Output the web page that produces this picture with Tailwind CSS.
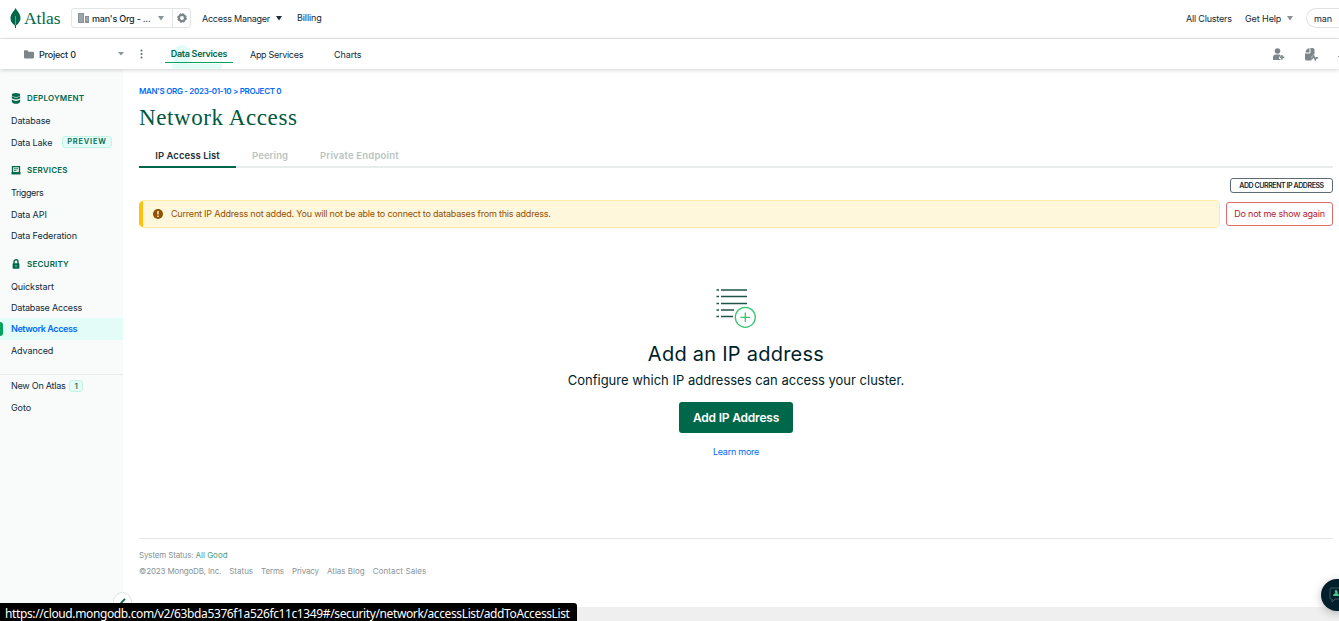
<!DOCTYPE html>
<html lang="en">
<head>
<meta charset="utf-8">
<title>Network Access | Atlas</title>
<script src="https://cdn.jsdelivr.net/npm/@tailwindcss/browser@4"></script>
</head>
<body class="relative flex h-[621px] w-[1339px] flex-col overflow-hidden whitespace-nowrap bg-white font-['Inter','Liberation_Sans',sans-serif] text-[9px] leading-none tracking-[-0.1px] text-[#0f2a38]">
<header class="flex h-[39px] shrink-0 items-center border-b border-[#e6eaea] pb-[2px]">
  <div class="ml-[10px] flex w-[61px] items-center">
    <svg class="h-5 w-[11px]" viewBox="0 0 11 20"><path d="M5.500 0C7 3 10.500 5.500 10.500 10c0 4-3 6.500-4.400 7.300L6 20H5l-.2-2.700C3 16 .5 14 .5 10 .5 5.500 4.500 3 5.500 0z" fill="#00684a"/><path d="M5.300 8h.5v9h-.5z" fill="#b8d6c9"/></svg>
    <span class="ml-[3px] mt-[2px] font-['Liberation_Serif',serif] text-[17.5px] tracking-[-0.1px] text-[#00684a]">Atlas</span>
  </div>
  <div class="flex h-5 w-[120px] items-center rounded-[3px] border border-[#e1e5e4] text-[9px]">
    <svg class="ml-[6px] h-[10px] w-[11px]" viewBox="0 0 11 10"><path d="M0 0h6v10H0zM7 3h4v7H7z" fill="#889397"/><path d="M1.500 2h1M3.500 2h1M1.500 4h1M3.500 4h1M1.500 6h1M3.500 6h1M1.500 8h1M3.500 8h1M8.500 5h1M8.500 7h1" stroke="#fff" stroke-width=".7"/></svg>
    <span class="ml-[3px] w-[66px] font-medium tracking-[-0.2px]">man's Org - ...</span>
    <svg class="h-[5px] w-[6px]" viewBox="0 0 6 5"><path d="M0 0h6L3 4.500z" fill="#889397"/></svg>
    <span class="ml-[8px] flex h-full flex-1 items-center justify-center border-l border-[#e1e5e4]"><svg class="h-[10px] w-[10px]" viewBox="0 0 10 10"><circle cx="5" cy="5" r="3.100" fill="none" stroke="#7c8689" stroke-width="2.400"/><circle cx="5" cy="5" r="4.400" fill="none" stroke="#7c8689" stroke-width="1" stroke-dasharray="1.900 1.550"/></svg></span>
  </div>
  <span class="ml-[11px] w-[74px] pt-px text-[9px] tracking-[-0.25px]">Access Manager</span>
  <svg class="h-[5px] w-[6px]" viewBox="0 0 6 5"><path d="M0 0h6L3 4.500z" fill="#1c2d38"/></svg>
  <span class="ml-[15px] pb-px">Billing</span>
  <span class="ml-auto w-[59px] pt-px text-[9px] tracking-[-0.2px]">All Clusters</span>
  <span class="w-[42px] text-[9px]">Get Help</span>
  <svg class="h-[5px] w-[6px]" viewBox="0 0 6 5"><path d="M0 0h6L3 4.500z" fill="#889397"/></svg>
  <div class="ml-[13px] flex h-5 w-[33px] items-center rounded-l-full border border-r-0 border-[#dfe3e2] pl-[7px]">man</div>
</header>
<nav class="relative z-10 flex h-[30px] shrink-0 items-center bg-white shadow-[0_1px_4px_rgba(0,0,0,0.18)]">
  <svg class="ml-[24px] h-[9px] w-[10px]" viewBox="0 0 10 9"><path d="M0 1.200C0 .5.400.3 1 .3h2.500l1 1.500H9q1 0 1 1V7.500q0 1-1 1H1q-1 0-1-1z" fill="#7c8689"/></svg>
  <span class="ml-[5px] w-[79px] font-medium tracking-[-0.2px]">Project 0</span>
  <svg class="h-[4px] w-[6px]" viewBox="0 0 6 4"><path d="M0 0h6L3 3.500z" fill="#889397"/></svg>
  <svg class="ml-[16px] h-[10px] w-[3px]" viewBox="0 0 3 10" fill="#5c6c75"><circle cx="1.500" cy="1.500" r="1"/><circle cx="1.500" cy="5" r="1"/><circle cx="1.500" cy="8.500" r="1"/></svg>
  <div class="relative ml-[22px] flex h-full w-[68px] justify-center text-[9px] font-semibold tracking-[-0.3px] text-[#00684a]">
    <div class="absolute left-[7px] top-[6px] h-[20px] w-[20px] rounded-full bg-[#e3fcf7]"></div>
    <div class="absolute left-[7px] top-[25px] h-[5px] w-[50px] bg-[#e3fcf7]"></div>
    <div class="relative mt-[5px] flex h-[19px] w-full items-center justify-center border-b border-[#00a35c]">Data Services</div>
  </div>
  <span class="ml-[17px] w-[84px] tracking-[-0.3px]">App Services</span>
  <span>Charts</span>
  <svg class="ml-auto h-3 w-3" viewBox="0 0 12 12" fill="#7c8689"><circle cx="4.500" cy="3" r="2.800"/><path d="M0 12V9.500Q0 6.500 3 6.500h3q1 0 1.500.5v1.500H6V11h1.500v1zM8.300 7h1.400v1.600h1.600V10H9.700v1.700H8.300V10H6.800V8.600h1.500z"/></svg>
  <svg class="ml-[20px] mr-[21px] h-[13px] w-[13px]" viewBox="0 0 13 13" fill="#7c8689"><path d="M4.500 0v4.500H.5Q.5 1 4.500 0zM5.500 0h2q2 0 2 2v4.500L8.500 6 7 9 6.500 8v4.500H1.500Q0 12.500 0 11V5.500h4.500Q5.500 5.500 5.500 4.500z"/><path d="M6 10.500h1.200l1.500-2.800 1.600 4 1-2H13" fill="none" stroke="#7c8689" stroke-width="1.500"/></svg>
  <span class="absolute right-0 top-[17px] h-px w-[1px] bg-[#889397]"></span>
</nav>
<div class="flex h-[538px] shrink-0">
  <aside class="flex w-[123px] shrink-0 flex-col bg-[#f9fbfa] pt-[18px]">
    <div class="flex h-[22px] items-center pl-[11px] text-[8px] font-semibold tracking-[0.2px] text-[#00684a]"><svg class="mr-[6px] h-[11px] w-[10px]" viewBox="0 0 10 11" fill="#00684a"><ellipse cx="5" cy="2" rx="4.200" ry="1.900"/><path d="M.8 3.300Q5 6 9.200 3.300v1.900Q5 8 .8 5.200zM.8 6.500Q5 9.300 9.200 6.500v2Q8.500 10.800 5 10.800T.8 8.500z"/></svg>DEPLOYMENT</div>
    <a class="mt-px flex h-[22px] items-center pb-[2px] pl-[11px]">Database</a>
    <a class="flex h-[22px] items-center pb-[2px] pl-[11px]"><span class="w-[51px]">Data Lake</span><span class="flex h-[12px] w-[50px] items-center justify-center rounded-[3px] border border-[#c3f3e3] bg-[#e3fcf7] text-[7.5px] font-semibold tracking-[0.8px] text-[#00684a]">PREVIEW</span></a>
    <div class="mt-[5px] flex h-[22px] items-center pl-[11px] text-[8px] font-semibold tracking-[0.2px] text-[#00684a]"><svg class="mr-[6px] h-[9px] w-[10px]" viewBox="0 0 10 9"><path d="M1.500.7h7v6h-7z" fill="#e3f0eb" stroke="#00684a" stroke-width="1.300"/><path d="M.5 6h9v2.500h-9z" fill="#00684a"/><path d="M3 2.700h4M3 4.500h2.500" stroke="#00684a" stroke-width=".8"/></svg>SERVICES</div>
    <a class="mt-px flex h-[22px] items-center pb-[2px] pl-[11px] tracking-[-0.4px]">Triggers</a>
    <a class="flex h-[22px] items-center pb-[2px] pl-[11px]">Data API</a>
    <a class="flex h-[21px] items-center pb-[2px] pl-[11px]">Data Federation</a>
    <div class="mt-[5px] flex h-[23px] items-center pl-[12px] text-[8px] font-semibold tracking-[0.2px] text-[#00684a]"><svg class="mr-[7px] h-[10px] w-[8px]" viewBox="0 0 8 10"><path d="M2 5V2.800a2 2 0 0 1 4 0V5" fill="none" stroke="#00684a" stroke-width="1.400"/><rect x=".6" y="4.200" width="6.800" height="5.600" rx=".8" fill="#00684a"/><path d="M3.600 6h.8v2h-.8z" fill="#cde3da"/></svg>SECURITY</div>
    <a class="mt-px flex h-[21px] items-center pl-[11px]">Quickstart</a>
    <a class="flex h-[21px] items-center pl-[11px] tracking-[-0.2px]">Database Access</a>
    <a class="flex h-[22px] items-center bg-[#e3fcf7] font-semibold tracking-[-0.4px] text-[#016bf8]"><span class="mr-[8px] h-[14px] w-[3px] rounded-r-[3px] bg-[#00a35c]"></span><span class="pb-[2px]">Network Access</span></a>
    <a class="flex h-[22px] items-center pb-[2px] pl-[11px]">Advanced</a>
    <div class="mt-[12px] border-t border-[#e8edeb]"></div>
    <a class="flex h-[22px] items-center pl-[11px]"><span class="w-[58px] pb-[2px] tracking-[-0.25px]">New On Atlas</span><span class="flex h-[12px] w-[14px] items-center justify-center rounded-[3px] border border-[#c3f3e3] bg-[#e3fcf7] text-[8px] font-medium text-[#00684a]">1</span></a>
    <a class="flex h-[22px] items-center pb-[2px] pl-[11px]">Goto</a>
  </aside>
  <main class="flex flex-1 flex-col pl-[16px] pr-[6px] pt-[16px]">
    <div class="flex h-[11px] items-center text-[8px] font-semibold tracking-[-0.32px] text-[#016bf8]">MAN'S ORG - 2023-01-10 &gt; PROJECT 0</div>
    <h1 class="mt-[7px] flex h-[28px] items-center font-['Liberation_Serif',serif] text-[23px] tracking-[0.6px] text-[#00593f]">Network Access</h1>
    <div class="mt-[14px] flex h-[23px] border-b-2 border-[#e8edeb] text-[9.5px] font-semibold tracking-[0.1px] text-[#b8c4c2]">
      <span class="flex h-[23px] w-[97px] items-center justify-center border-b-2 border-[#00684a] tracking-[0.05px] text-[#21313c]">IP Access List</span>
      <span class="ml-[16px] flex h-[21px] w-[68px] items-center">Peering</span>
      <span class="flex h-[21px] items-center tracking-[0.2px]">Private Endpoint</span>
    </div>
    <div class="mt-[10px] flex h-[15px] justify-end"><button class="flex w-[103px] items-center justify-center rounded-[3px] border border-[#5c6c75] text-[7px] font-semibold tracking-[-0.42px]">ADD CURRENT IP ADDRESS</button></div>
    <div class="mt-[7px] flex h-[28px] items-center justify-between">
      <div class="flex h-[28px] w-[1081px] items-center overflow-hidden rounded-[5px] border border-l-0 border-[#ffec9e] bg-[#fef7db] text-[#944f01]"><span class="h-[28px] w-[4px] bg-[#ffc010]"></span>
        <svg class="ml-[10px] h-[10px] w-[10px]" viewBox="0 0 10 10"><circle cx="5" cy="5" r="5" fill="#944f01"/><path d="M4.300 2h1.400v3.500H4.300zM4.300 6.500h1.400v1.400H4.300z" fill="#fef7db"/></svg>
        <span class="ml-[8px] pb-[2px] tracking-[-0.2px]">Current IP Address not added. You will not be able to connect to databases from this address.</span></div>
      <button class="flex h-[24px] w-[107px] items-center justify-center rounded-[3px] border border-[#e06c69] pb-[1px] text-[9px] tracking-[-0.2px] text-[#b5202d]">Do not me show again</button>
    </div>
    <section class="mt-[60px] flex h-[250px] flex-col items-center">
      <svg class="h-[40px] w-[40px]" viewBox="0 0 40 40" fill="none"><path d="M5 2h26M5 8.500h26M5 15.500h26M5 22h13M5 28.500h12" stroke="#1f5549" stroke-width="1.400"/><path d="M.5 2h2.500M.5 8.500h2.500M.5 15.500h2.500M.5 22h2.500M.5 28.500h2.500" stroke="#1f5549" stroke-width="1.500"/><circle cx="29.300" cy="29.300" r="10" stroke="#35c56f" stroke-width="1.300"/><path d="M29.300 24.500v9.600M24.500 29.300h9.600" stroke="#35c56f" stroke-width="1.300"/></svg>
      <h2 class="mt-[14px] flex h-[24px] items-center text-[20px] tracking-[0.25px] text-[#001e2b]">Add an IP address</h2>
      <p class="mt-[6px] flex h-[16px] items-center pt-px text-[13px] tracking-normal text-[#001e2b]">Configure which IP addresses can access your cluster.</p>
      <button class="mt-[14px] flex h-[31px] w-[114px] items-center justify-center rounded-[3px] bg-[#00684a] text-[12px] font-semibold tracking-[-0.2px] text-white">Add IP Address</button>
      <a class="mt-[13px] flex h-[12px] items-center pb-[2px] tracking-[-0.25px] text-[#016bf8]">Learn more</a>
    </section>
    <footer class="border-t border-[#e3e6e5] pt-[10px] text-[8px] tracking-[-0.15px] text-[#889397]">
      <div class="flex h-[12px] items-center">System Status:&nbsp;<span class="text-[#4d9a80] tracking-normal">All Good</span></div>
      <div class="mt-[4px] flex h-[12px] items-center gap-[8px]"><span>©2023 MongoDB, Inc.</span><span class="tracking-normal">Status</span><span>Terms</span><span>Privacy</span><span class="tracking-normal">Atlas Blog</span><span class="tracking-[0.1px]">Contact Sales</span></div>
    </footer>
  </main>
</div>
<div class="h-[14px] shrink-0 bg-[#efefef]"></div>
<div class="absolute left-[113px] top-[592px] flex h-[19px] w-[19px] justify-center rounded-full border border-[#dde5e2] bg-white pt-[5px]"><svg class="h-[9px] w-[6px]" viewBox="0 0 6 9"><path d="M5 .8 1.500 4.500 5 8.200" fill="none" stroke="#00684a" stroke-width="1.800"/></svg></div>
<div class="absolute left-[1321px] top-[579px] flex h-[32px] w-[32px] items-center rounded-full bg-[#001e2b] shadow-[0_2px_8px_rgba(0,0,0,0.25)]"><svg class="ml-[8px] h-[16px] w-[18px]" viewBox="0 0 18 16" fill="none"><path d="M2 1h14q1 0 1 1v9q0 1-1 1H6l-3 3v-3H2q-1 0-1-1V2q0-1 1-1z" stroke="#3d5a62"/><path d="M4 9Q4 6 6.500 6.500 5 3 7 3t1.500 3.500Q10 6 10 9zM11 9V7h2l-1-3h2l3 5z" fill="#47c58a"/></svg></div>
<div class="absolute bottom-0 left-0 flex h-[18px] w-[577px] items-center rounded-tr-[3px] bg-black pl-[5px] pt-[3px] font-['Noto_Sans',sans-serif] text-[12px] tracking-[-0.38px] text-white">https://cloud.mongodb.com/v2/63bda5376f1a526fc11c1349#/security/network/accessList/addToAccessList</div>
</body>
</html>
